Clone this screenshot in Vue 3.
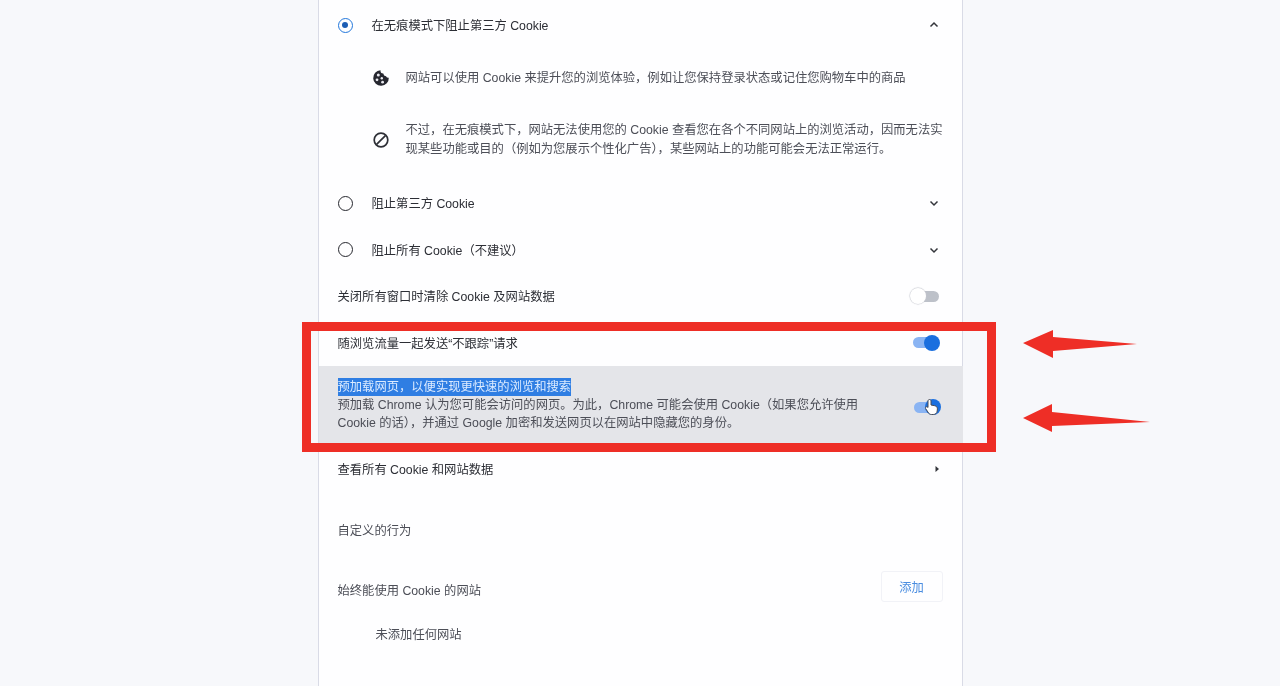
<script setup>
const items = [
  { label: '阻止第三方 Cookie' },
  { label: '阻止所有 Cookie（不建议）' }
]
</script>

<template>
  <div class="page">
    <main class="card">
      <div class="row radio-row first">
        <span class="radio on"><i></i></span>
        <span class="label">在无痕模式下阻止第三方 Cookie</span>
        <svg class="chev" width="12" height="12" viewBox="0 0 12 12"><path d="M2.5 7.5 6 4l3.5 3.5" /></svg>
      </div>
      <div class="details">
        <div class="detail one">
          <svg class="dicon" width="18" height="18" viewBox="0 0 18 18">
            <path d="M8.500 1.200a3 3 0 0 0 2.800 3.300 3 3 0 0 0 2.700 2.700 2.800 2.800 0 0 0 2.800 1.500A7.800 7.800 0 1 1 8.500 1.200z" fill="#26272f" />
            <circle cx="6.300" cy="6" r="1.500" fill="#e9e9ef" />
            <circle cx="5" cy="10.800" r="1.400" fill="#e9e9ef" />
            <circle cx="9.800" cy="9.300" r="1.200" fill="#e9e9ef" />
            <circle cx="10.600" cy="13.200" r="1.400" fill="#e9e9ef" />
          </svg>
          <p>网站可以使用 Cookie 来提升您的浏览体验，例如让您保持登录状态或记住您购物车中的商品</p>
        </div>
        <div class="detail two">
          <svg class="dicon" width="18" height="18" viewBox="0 0 18 18">
            <circle cx="9" cy="9" r="6.800" fill="none" stroke="#2d2f36" stroke-width="1.700" />
            <path d="M4.600 13.400 13.400 4.600" stroke="#2d2f36" stroke-width="1.700" />
          </svg>
          <p>不过，在无痕模式下，网站无法使用您的 Cookie 查看您在各个不同网站上的浏览活动，因而无法实现某些功能或目的（例如为您展示个性化广告），某些网站上的功能可能会无法正常运行。</p>
        </div>
      </div>
      <div v-for="item in items" :key="item.label" class="row radio-row">
        <span class="radio"></span>
        <span class="label">{{ item.label }}</span>
        <svg class="chev" width="12" height="12" viewBox="0 0 12 12"><path d="M2.5 4.5 6 8l3.5-3.5" /></svg>
      </div>
      <div class="row plain">
        <span class="label">关闭所有窗口时清除 Cookie 及网站数据</span>
        <span class="toggle off"><i></i></span>
      </div>
      <div class="row plain">
        <span class="label">随浏览流量一起发送“不跟踪”请求</span>
        <span class="toggle"><i></i></span>
      </div>
      <div class="row preload">
        <div class="preload-text">
          <span class="selected">预加载网页，以便实现更快速的浏览和搜索</span>
          <p>预加载 Chrome 认为您可能会访问的网页。为此，Chrome 可能会使用 Cookie（如果您允许使用 Cookie 的话），并通过 Google 加密和发送网页以在网站中隐藏您的身份。</p>
        </div>
        <span class="toggle lowered">
          <i></i>
          <svg class="hand" width="16" height="18" viewBox="0 0 16 18">
            <path d="M5.500 1.500c.9 0 1.500.6 1.500 1.500v4l3.600.7c1.800.4 2.900 1.500 2.800 3.200l-.2 2.100c-.2 2.100-1.700 3.500-3.900 3.500H7.500c-1.300 0-2.200-.5-2.900-1.500L1.700 10.700c-.5-.8-.3-1.500.3-1.800.6-.3 1.300-.1 2 .6V3c0-.9.600-1.500 1.500-1.500z" fill="#fff" stroke="#4a4c55" stroke-width="1" />
          </svg>
        </span>
      </div>
      <div class="row link-row">
        <span class="label">查看所有 Cookie 和网站数据</span>
        <svg class="tri" width="6" height="8" viewBox="0 0 6 8"><path d="M1.500 1 5 4 1.500 7z" fill="#33353b" /></svg>
      </div>
      <h2 class="section">自定义的行为</h2>
      <div class="allow">
        <span class="allow-label">始终能使用 Cookie 的网站</span>
        <button class="add" type="button">添加</button>
      </div>
      <p class="empty">未添加任何网站</p>
    </main>

    <div class="callout"></div>
    <svg class="arrows" width="140" height="120" viewBox="0 0 140 120">
      <path d="M3 23 33 10v7l84 7-84 7v7z" fill="#ee2e26" />
      <path d="M3 98 32 84v8l98 10-98 4v6z" fill="#ee2e26" />
    </svg>
  </div>
</template>

<style scoped>
.page {
  position: relative;
  height: 686px;
  overflow: hidden;
  background: #f7f8fb;
  font-family: "Liberation Sans", "Noto Sans CJK SC", sans-serif;
  font-size: 12.3px;
  color: #33353c;
}
.card {
  width: 645px;
  height: 686px;
  margin: 0 auto;
  box-sizing: border-box;
  background: #fefeff;
  border-left: 1px solid #d9dbe6;
  border-right: 1px solid #d9dbe6;
  filter: blur(0.45px);
}
.row {
  display: flex;
  align-items: center;
  padding: 0 23px 0 19px;
  box-sizing: border-box;
}
.radio-row { height: 46.500px; }
.first { height: 50px; }
.plain { height: 46.500px; }
.label { flex: 1; color: #2c2e35; }
.radio {
  width: 15px;
  height: 15px;
  box-sizing: border-box;
  border: 1.800px solid #26272e;
  border-radius: 50%;
  margin-right: 19px;
  display: flex;
  align-items: center;
  justify-content: center;
}
.radio.on { border-color: #2277dc; }
.radio.on i {
  width: 6.500px;
  height: 6.500px;
  border-radius: 50%;
  background: #1c5db4;
}
.chev {
  fill: none;
  stroke: #33353b;
  stroke-width: 1.500;
  margin-right: -1px;
}
.details { padding-left: 53px; padding-right: 19px; height: 130px; }
.detail {
  display: flex;
  align-items: center;
  gap: 16px;
}
.detail p {
  flex: 1;
  margin: 0;
  line-height: 19px;
  color: #4c4e57;
}
.dicon { flex: none; }
.detail.one { height: 56px; }
.detail.two { height: 67px; }
.toggle {
  position: relative;
  width: 26px;
  height: 11px;
  border-radius: 6px;
  background: #8ab4f3;
}
.toggle i {
  position: absolute;
  right: -1px;
  top: -2.500px;
  width: 16px;
  height: 16px;
  border-radius: 50%;
  background: #1a6fdf;
}
.toggle.lowered { margin-top: 5px; }
.toggle.off { background: #bdc1c9; }
.toggle.off i {
  left: -3px;
  right: auto;
  background: #fff;
  box-shadow: 0 0 1px 0.500px #c6c8cf;
}
.preload {
  height: 77px;
  background: #e4e5e9;
  margin: 0 -1px 0 0;
}
.preload-text {
  flex: 1;
  padding-right: 44px;
  margin-top: 1px;
}
.preload-text p {
  margin: 0;
  line-height: 18.500px;
  color: #4c4e57;
}
.selected {
  display: inline-block;
  background: #2f7ee3;
  color: #dcebff;
  line-height: 18px;
}
.hand {
  position: absolute;
  left: 10px;
  top: -4px;
}
.link-row { height: 52px; }
.tri { margin-right: -1px; }
.section {
  margin: 0;
  padding: 27px 19px 0;
  height: 62px;
  box-sizing: border-box;
  font-size: 12.300px;
  font-weight: 400;
  line-height: 18px;
  color: #4c4e57;
}
.allow {
  display: flex;
  justify-content: space-between;
  align-items: flex-start;
  padding: 14px 19px 0;
}
.allow-label {
  padding-top: 10px;
  color: #4c4e57;
}
.add {
  width: 62px;
  height: 31px;
  background: #fefeff;
  border: 1px solid #f1f2f7;
  border-radius: 3px;
  font: inherit;
  color: #4a8de0;
}
.empty {
  margin: 0;
  padding: 23px 0 0 57px;
  color: #4c4e57;
}
.callout {
  position: absolute;
  left: 302px;
  top: 322px;
  width: 694px;
  height: 130px;
  box-sizing: border-box;
  border: 9px solid #ee2e26;
}
.arrows {
  position: absolute;
  left: 1020px;
  top: 320px;
}
</style>
